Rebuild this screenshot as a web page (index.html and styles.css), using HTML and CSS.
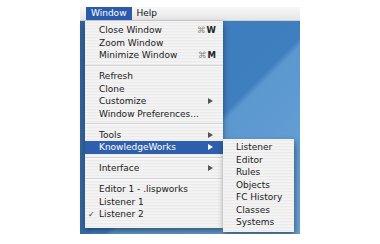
FILE: index.html
```html
<!DOCTYPE html>
<html lang="en">
<head>
  <meta charset="UTF-8">
  <title>Window menu</title>
  <link rel="stylesheet" href="styles.css">
</head>
<body>

<div class="screen">
  <div class="menubar">
    <span class="title active">Window</span>
    <span class="title">Help</span>
  </div>

  <div class="menu">
    <div class="item"><span class="mark"></span><span class="label">Close Window</span><span class="key"><i>⌘</i>W</span></div>
    <div class="item"><span class="mark"></span><span class="label">Zoom Window</span></div>
    <div class="item"><span class="mark"></span><span class="label">Minimize Window</span><span class="key"><i>⌘</i>M</span></div>
    <div class="sep"></div>
    <div class="item"><span class="mark"></span><span class="label">Refresh</span></div>
    <div class="item"><span class="mark"></span><span class="label">Clone</span></div>
    <div class="item"><span class="mark"></span><span class="label">Customize</span><span class="arrow"></span></div>
    <div class="item"><span class="mark"></span><span class="label">Window Preferences...</span></div>
    <div class="sep"></div>
    <div class="item"><span class="mark"></span><span class="label">Tools</span><span class="arrow"></span></div>
    <div class="item selected"><span class="mark"></span><span class="label">KnowledgeWorks</span><span class="arrow"></span>
      <div class="submenu">
        <div class="subitem">Listener</div>
        <div class="subitem">Editor</div>
        <div class="subitem">Rules</div>
        <div class="subitem">Objects</div>
        <div class="subitem">FC History</div>
        <div class="subitem">Classes</div>
        <div class="subitem">Systems</div>
      </div>
    </div>
    <div class="sep"></div>
    <div class="item"><span class="mark"></span><span class="label">Interface</span><span class="arrow"></span></div>
    <div class="sep"></div>
    <div class="item"><span class="mark"></span><span class="label">Editor 1 - .lispworks</span></div>
    <div class="item"><span class="mark"></span><span class="label">Listener 1</span></div>
    <div class="item"><span class="mark">✓</span><span class="label">Listener 2</span></div>
  </div>
</div>

</body>
</html>
```

FILE: styles.css
```css
body, html {
  margin: 0;
  padding: 0;
  background: #fff;
  font-family: "DejaVu Sans", sans-serif;
  font-size: 9px;
  color: #1a1a1a;
}

body {
  display: flex;
  justify-content: center;
  padding-top: 7px;
}

.screen {
  width: 220px;
  height: 227px;
  background:
    linear-gradient(90deg, rgba(0, 0, 0, 0.18), rgba(0, 0, 0, 0) 12px),
    linear-gradient(135deg, #3a77b8 0%, #3f7fc0 56%, #5b98d0 58%, #6aa3d6 100%);
}

.menubar {
  display: flex;
  height: 14px;
  padding-left: 6px;
  background: linear-gradient(#f7f7f7, #e6e6e6);
  border-bottom: 1px solid #cfcfcf;
  box-sizing: border-box;
}

.title {
  padding: 0 5px;
  line-height: 13px;
  color: #111;
}

.title.active {
  background: #2c5aab;
  color: #fff;
}

.menu {
  width: 138px;
  margin-left: 5px;
  padding: 3px 0 7px;
  background: repeating-linear-gradient(#f4f4f4 0 1px, #ebebeb 1px 2px, #f1f1f1 2px 3px);
  box-shadow: 0 3px 6px rgba(0, 0, 0, 0.45);
}

.item {
  position: relative;
  display: flex;
  align-items: center;
  height: 12.5px;
  padding: 0 7px 0 3px;
}

.item.selected {
  background: #2f5eac;
  color: #fff;
}

.mark {
  width: 11px;
  font-size: 8px;
  color: #333;
}

.label {
  flex: 1;
  white-space: nowrap;
}

.key {
  font-weight: bold;
  font-size: 8.5px;
  color: #222;
}

.key i {
  font-style: normal;
  font-weight: normal;
  color: #888;
  margin-right: 1px;
}

.arrow {
  width: 0;
  height: 0;
  margin-right: 3px;
  border-left: 5px solid #555;
  border-top: 3.5px solid transparent;
  border-bottom: 3.5px solid transparent;
}

.selected .arrow {
  border-left-color: #fff;
}

.sep {
  height: 1px;
  margin: 3px 0 3.5px;
  background: #d2d2d2;
  border-bottom: 1px solid #fafafa;
  box-sizing: content-box;
}

.submenu {
  position: absolute;
  left: 100%;
  top: -2px;
  width: 71px;
  padding: 2px 0 3px;
  background: repeating-linear-gradient(#f4f4f4 0 1px, #ebebeb 1px 2px, #f1f1f1 2px 3px);
  box-shadow: 1px 3px 6px rgba(0, 0, 0, 0.45);
  color: #1a1a1a;
}

.subitem {
  height: 12.5px;
  line-height: 12.5px;
  padding-left: 13px;
  white-space: nowrap;
}
```
